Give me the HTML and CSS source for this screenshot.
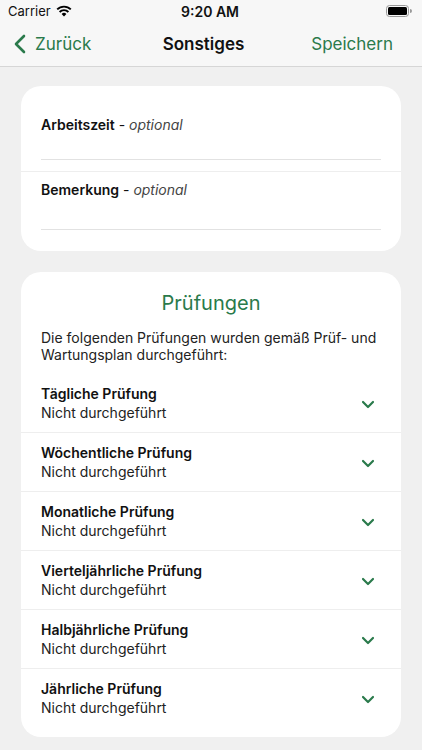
FILE: index.html
```html
<!DOCTYPE html>
<html>
<head>
    <title>Sonstiges</title>
    <link rel="stylesheet" href="styles.css">
</head>
<body>
    <div class="status-bar">
        <div class="status-left">
            <span>Carrier</span>
            <svg class="wifi" width="16" height="12" viewBox="0 0 16 12">
                <path d="M8 11.5 L5.6 9 A3.4 3.4 0 0 1 10.4 9 Z" fill="#000"/>
                <path d="M3.6 7 A6.2 6.2 0 0 1 12.4 7" stroke="#000" stroke-width="1.9" fill="none"/>
                <path d="M1.2 4.4 A9.6 9.6 0 0 1 14.8 4.4" stroke="#000" stroke-width="1.9" fill="none"/>
            </svg>
        </div>
        <div class="status-time">9:20 AM</div>
        <div class="status-right">
            <svg width="26" height="12" viewBox="0 0 26 12">
                <rect x="0.5" y="0.5" width="22" height="11" rx="3" fill="none" stroke="#999" stroke-width="1"/>
                <rect x="2" y="2" width="19" height="8" rx="1.5" fill="#000"/>
                <path d="M24 4 v4 a2 2 0 0 0 0 -4z" fill="#999"/>
            </svg>
        </div>
    </div>

    <div class="nav-bar">
        <div class="nav-back">
            <svg width="12" height="20" viewBox="0 0 12 20">
                <path d="M10 2 L2 10 L10 18" stroke="#2a7a4b" stroke-width="2.6" fill="none" stroke-linecap="round" stroke-linejoin="round"/>
            </svg>
            <span>Zurück</span>
        </div>
        <div class="nav-title">Sonstiges</div>
        <div class="nav-save">Speichern</div>
    </div>

    <div class="content">
        <div class="card">
            <div class="field">
                <div class="field-label"><b>Arbeitszeit</b> - <i>optional</i></div>
                <div class="field-line"></div>
            </div>
            <div class="field">
                <div class="field-label"><b>Bemerkung</b> - <i>optional</i></div>
                <div class="field-line"></div>
            </div>
        </div>

        <div class="card checks">
            <h2>Prüfungen</h2>
            <p class="checks-text">Die folgenden Prüfungen wurden gemäß Prüf- und Wartungsplan durchgeführt:</p>

            <div class="check-row">
                <div>
                    <div class="check-name">Tägliche Prüfung</div>
                    <div class="check-state">Nicht durchgeführt</div>
                </div>
                <svg class="chevron" width="14" height="9" viewBox="0 0 14 9"><path d="M2 2 L7 7 L12 2" stroke="#2a7a4b" stroke-width="2.2" fill="none" stroke-linecap="round" stroke-linejoin="round"/></svg>
            </div>
            <div class="check-row">
                <div>
                    <div class="check-name">Wöchentliche Prüfung</div>
                    <div class="check-state">Nicht durchgeführt</div>
                </div>
                <svg class="chevron" width="14" height="9" viewBox="0 0 14 9"><path d="M2 2 L7 7 L12 2" stroke="#2a7a4b" stroke-width="2.2" fill="none" stroke-linecap="round" stroke-linejoin="round"/></svg>
            </div>
            <div class="check-row">
                <div>
                    <div class="check-name">Monatliche Prüfung</div>
                    <div class="check-state">Nicht durchgeführt</div>
                </div>
                <svg class="chevron" width="14" height="9" viewBox="0 0 14 9"><path d="M2 2 L7 7 L12 2" stroke="#2a7a4b" stroke-width="2.2" fill="none" stroke-linecap="round" stroke-linejoin="round"/></svg>
            </div>
            <div class="check-row">
                <div>
                    <div class="check-name">Vierteljährliche Prüfung</div>
                    <div class="check-state">Nicht durchgeführt</div>
                </div>
                <svg class="chevron" width="14" height="9" viewBox="0 0 14 9"><path d="M2 2 L7 7 L12 2" stroke="#2a7a4b" stroke-width="2.2" fill="none" stroke-linecap="round" stroke-linejoin="round"/></svg>
            </div>
            <div class="check-row">
                <div>
                    <div class="check-name">Halbjährliche Prüfung</div>
                    <div class="check-state">Nicht durchgeführt</div>
                </div>
                <svg class="chevron" width="14" height="9" viewBox="0 0 14 9"><path d="M2 2 L7 7 L12 2" stroke="#2a7a4b" stroke-width="2.2" fill="none" stroke-linecap="round" stroke-linejoin="round"/></svg>
            </div>
            <div class="check-row">
                <div>
                    <div class="check-name">Jährliche Prüfung</div>
                    <div class="check-state">Nicht durchgeführt</div>
                </div>
                <svg class="chevron" width="14" height="9" viewBox="0 0 14 9"><path d="M2 2 L7 7 L12 2" stroke="#2a7a4b" stroke-width="2.2" fill="none" stroke-linecap="round" stroke-linejoin="round"/></svg>
            </div>
        </div>
    </div>
</body>
</html>
```

FILE: styles.css
```css
body {
    font-family: Inter, "Noto Sans", sans-serif;
    margin: 0;
    padding: 0;
    background-color: #f0f0f0;
    color: #111;
}

.status-bar {
    height: 22px;
    background-color: #f7f7f7;
    display: flex;
    align-items: center;
    justify-content: space-between;
    padding: 0 10px 0 8px;
    font-size: 13px;
}

.status-left {
    display: flex;
    align-items: center;
    gap: 5px;
    width: 100px;
}

.status-time {
    font-weight: 600;
    font-size: 14px;
}

.status-right {
    width: 100px;
    display: flex;
    justify-content: flex-end;
}

.nav-bar {
    height: 44px;
    background-color: #f7f7f7;
    border-bottom: 1px solid #d6d6d6;
    display: flex;
    align-items: center;
    justify-content: space-between;
    padding: 0 29px 0 14px;
    font-size: 17px;
}

.nav-back {
    display: flex;
    align-items: center;
    gap: 9px;
    color: #2a7a4b;
    width: 120px;
}

.nav-title {
    font-weight: 600;
}

.nav-save {
    color: #2a7a4b;
    width: 120px;
    text-align: right;
}

.content {
    padding: 19px 21px 20px;
    display: flex;
    flex-direction: column;
    gap: 21px;
}

.card {
    background-color: #fff;
    border-radius: 20px;
    overflow: hidden;
}

.field {
    padding: 30px 20px 11px;
}

.field + .field {
    border-top: 1px solid #eee;
    padding-top: 9px;
    padding-bottom: 21px;
}

.field-label {
    font-size: 14px;
    color: #111;
}

.field-label b {
    font-weight: 600;
}

.field-label i {
    color: #444;
}

.field-line {
    margin-top: 26px;
    border-bottom: 1px solid #e2e2e2;
}

.field + .field .field-line {
    margin-top: 31px;
}

.checks h2 {
    margin: 19px 0 0;
    text-align: center;
    font-weight: 400;
    font-size: 20px;
    color: #2a7a4b;
}

.checks-text {
    margin: 14px 20px 11px;
    font-size: 14px;
    line-height: 17px;
    color: #222;
}

.check-row {
    display: flex;
    align-items: center;
    justify-content: space-between;
    padding: 8px 26px 8px 20px;
    height: 42px;
}

.check-row + .check-row {
    border-top: 1px solid #eee;
}

.check-row:last-child {
    padding-bottom: 18px;
}

.check-name {
    font-weight: 600;
    font-size: 14px;
    line-height: 19px;
}

.check-state {
    font-size: 14px;
    line-height: 19px;
    color: #222;
}

.chevron {
    margin-top: 2px;
}
```
